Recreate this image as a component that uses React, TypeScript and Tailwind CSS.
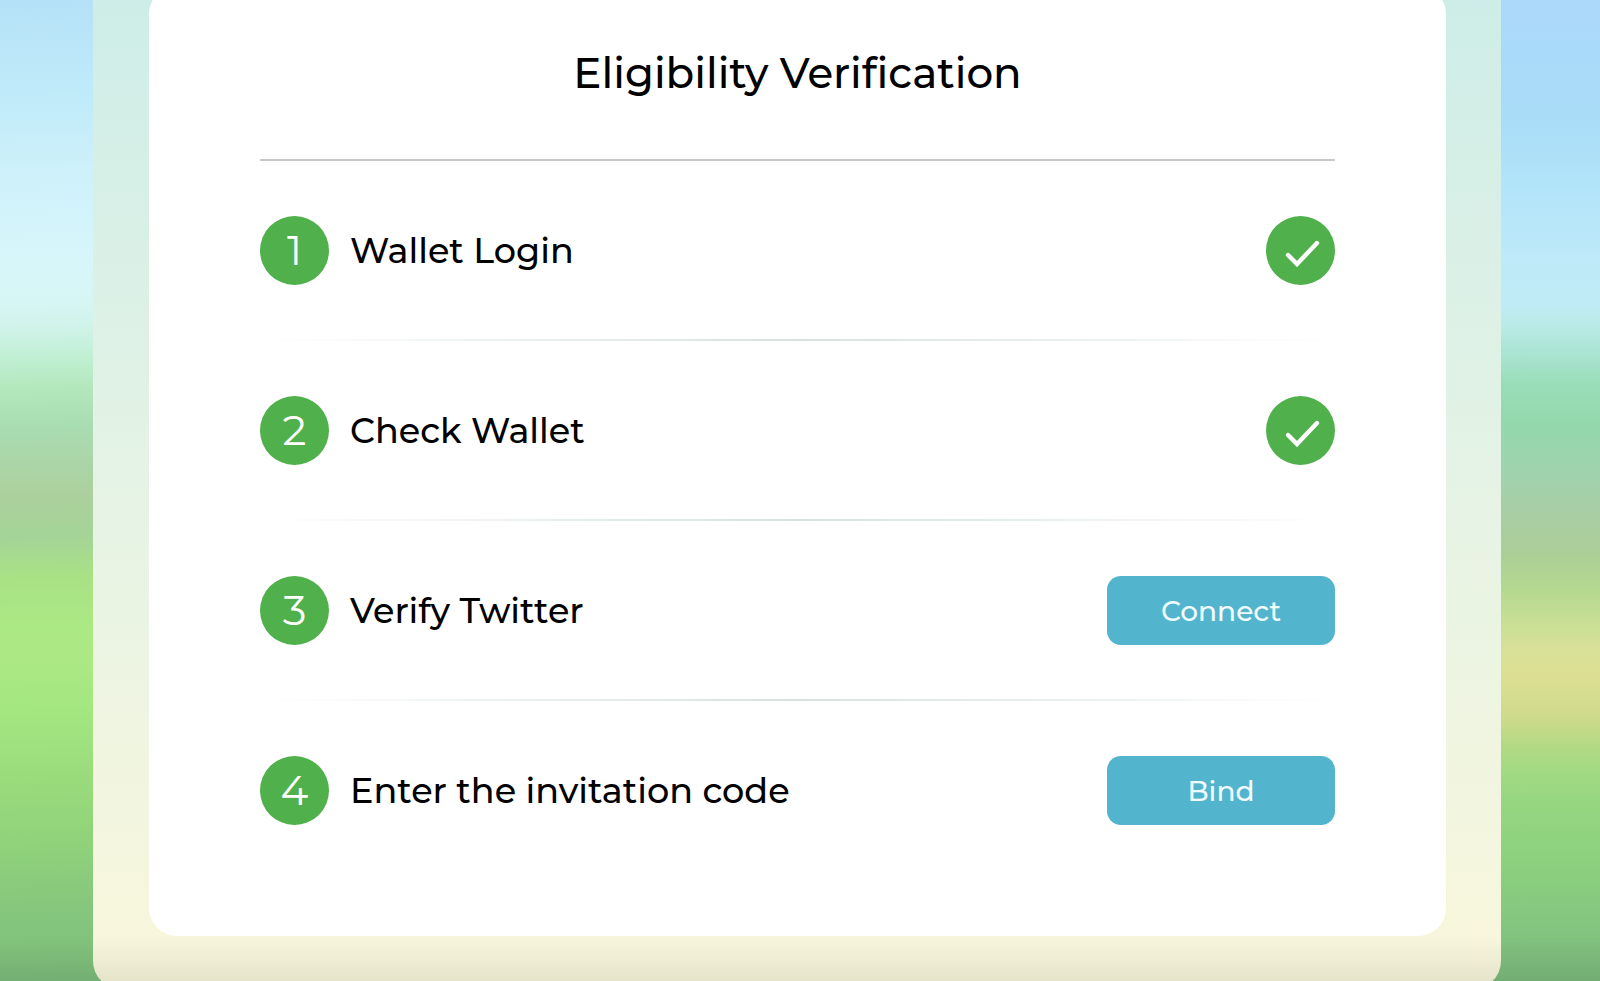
type Step = {
  label: string;
  action?: string;
};

const steps: Step[] = [
  { label: "Wallet Login" },
  { label: "Check Wallet" },
  { label: "Verify Twitter", action: "Connect" },
  { label: "Enter the invitation code", action: "Bind" },
];

function CheckBadge() {
  return (
    <span className="flex size-[69px] items-center justify-center rounded-full bg-[#50b04b]">
      <svg viewBox="0 0 69 69" className="size-full" fill="none" role="img" aria-label="Completed">
        <path d="M22 39 L31 48 L51 27" stroke="#fff" strokeWidth="4.4" strokeLinecap="round" />
      </svg>
    </span>
  );
}

function Scenery() {
  return (
    <div className="absolute inset-0 grid grid-cols-2" aria-hidden="true">
      <div className="bg-[linear-gradient(179deg,#b5e1f8_0%,#c0ebf9_10%,#cff1fa_18%,#d6f6fa_26%,#d6f6f6_30%,#d0f3e9_33%,#c0efd3_36%,#b3e8bd_39%,#a8ddb1_43%,#abd6a9_46%,#acd09c_50%,#a4d497_54%,#a8e185_58%,#abe984_63%,#ace985_66%,#a3e680_72%,#9adc7c_78%,#8fd27a_85%,#86c77d_91%,#80c27c_96%,#7cbb7c_100%)]" />
      <div className="bg-[linear-gradient(180deg,#acd8fa_0%,#a9daf9_6%,#aaddf7_13%,#b2e4f9_19%,#bde9f9_26%,#bfebf5_31%,#bbebe8_33%,#aae4d3_36%,#9adeb9_39%,#93d8ad_43%,#9fd3ae_48%,#a8cea5_52%,#abcd98_56%,#b4d890_60%,#c6de94_63%,#d8e098_66%,#dcdf92_69%,#ceda8c_73%,#b4d984_76%,#9fda82_79%,#93d580_83%,#8bcf7e_89%,#83c480_95%,#7cbb7c_100%)]" />
    </div>
  );
}

function StepRow({ step, index }: { step: Step; index: number }) {
  return (
    <li>
      <div className="flex items-center justify-between pt-[55px] pb-[54px]">
        <div className="flex items-center gap-[21px]">
          <span className="flex size-[69px] items-center justify-center rounded-full bg-[#50b04b] text-[42px] leading-[69px] text-white">
            {index + 1}
          </span>
          <span className="text-[35px] leading-[69px] font-medium">{step.label}</span>
        </div>
        {step.action ? (
          <button
            type="button"
            className="h-[69px] w-[228px] rounded-[14px] bg-[#53b4cd] text-[28px] font-medium text-[#f0fcff]"
          >
            {step.action}
          </button>
        ) : (
          <CheckBadge />
        )}
      </div>
      {index < steps.length - 1 && (
        <div className="h-[2px] bg-linear-to-r from-transparent via-[#d6e3de] to-transparent" />
      )}
    </li>
  );
}

export default function App() {
  return (
    <div className="relative h-screen overflow-hidden pr-[99px] pl-[93px] font-['Montserrat','Inter',sans-serif] text-black">
      <Scenery />
      <main className="relative -mt-[14px] rounded-b-[28px] bg-linear-to-b from-[#cdede8] via-[#e5f3e5] to-[#faf7dc] pr-[55px] pb-[53px] pl-[56px]">
        <section className="rounded-[28px] bg-white px-[111px] pb-[57px]">
          <h1 className="border-b-2 border-[#c8c8c8] pt-[58px] pb-[57px] text-center text-[42px] leading-[58px] font-medium">
            Eligibility Verification
          </h1>
          <ol>
            {steps.map((step, index) => (
              <StepRow key={step.label} step={step} index={index} />
            ))}
          </ol>
        </section>
      </main>
      <div className="pointer-events-none absolute inset-x-0 bottom-0 h-[45px] bg-linear-to-b from-transparent to-black/8" />
    </div>
  );
}
